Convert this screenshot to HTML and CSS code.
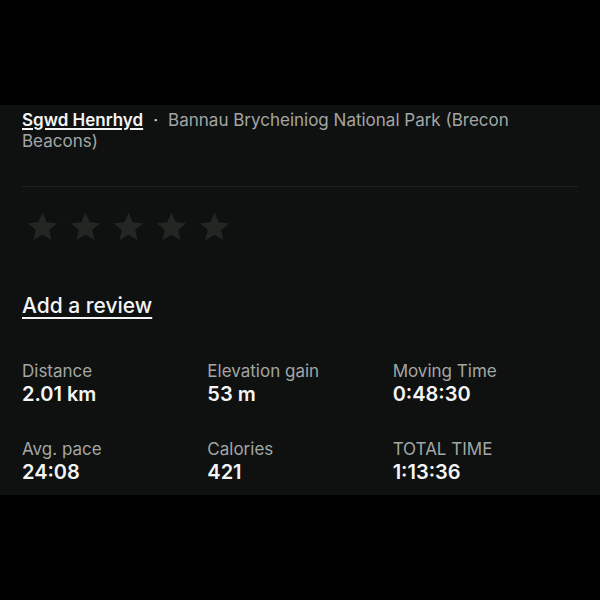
FILE: index.html
```html
<!DOCTYPE html>
<html lang="en">
<head>
    <meta charset="UTF-8">
    <meta name="viewport" content="width=device-width, initial-scale=1.0">
    <title>Activity</title>
    <link rel="stylesheet" href="styles.css">
</head>
<body>

<div class="panel">
    <p class="place">
        <a href="#" class="place-name">Sgwd Henrhyd</a><span class="dot">·</span>Bannau Brycheiniog National Park (Brecon Beacons)
    </p>

    <hr class="divider">

    <div class="stars">
        <svg viewBox="0 0 24 24"><path d="M12 2.5l2.9 6.6 7.1.6-5.4 4.7 1.6 7-6.2-3.7-6.2 3.7 1.6-7L2 9.7l7.1-.6z"/></svg>
        <svg viewBox="0 0 24 24"><path d="M12 2.5l2.9 6.6 7.1.6-5.4 4.7 1.6 7-6.2-3.7-6.2 3.7 1.6-7L2 9.7l7.1-.6z"/></svg>
        <svg viewBox="0 0 24 24"><path d="M12 2.5l2.9 6.6 7.1.6-5.4 4.7 1.6 7-6.2-3.7-6.2 3.7 1.6-7L2 9.7l7.1-.6z"/></svg>
        <svg viewBox="0 0 24 24"><path d="M12 2.5l2.9 6.6 7.1.6-5.4 4.7 1.6 7-6.2-3.7-6.2 3.7 1.6-7L2 9.7l7.1-.6z"/></svg>
        <svg viewBox="0 0 24 24"><path d="M12 2.5l2.9 6.6 7.1.6-5.4 4.7 1.6 7-6.2-3.7-6.2 3.7 1.6-7L2 9.7l7.1-.6z"/></svg>
    </div>

    <a href="#" class="review-link">Add a review</a>

    <div class="stats">
        <div class="stat">
            <div class="stat-label">Distance</div>
            <div class="stat-value">2.01 km</div>
        </div>
        <div class="stat">
            <div class="stat-label">Elevation gain</div>
            <div class="stat-value">53 m</div>
        </div>
        <div class="stat">
            <div class="stat-label">Moving Time</div>
            <div class="stat-value">0:48:30</div>
        </div>
        <div class="stat">
            <div class="stat-label">Avg. pace</div>
            <div class="stat-value">24:08</div>
        </div>
        <div class="stat">
            <div class="stat-label">Calories</div>
            <div class="stat-value">421</div>
        </div>
        <div class="stat">
            <div class="stat-label">TOTAL TIME</div>
            <div class="stat-value">1:13:36</div>
        </div>
    </div>
</div>

</body>
</html>
```

FILE: styles.css
```css
html, body {
    background: #000;
}
body {
    margin: 0;
    padding: 105px 0;
    font-family: Inter, "Noto Sans", sans-serif;
    color: #f2f2f2;
}
.panel {
    background: #0e1110;
    padding: 5px 22px 11px;
}
.place {
    margin: 0;
    font-size: 17px;
    line-height: 21px;
    color: #a3a6a4;
}
.place-name {
    color: #f4f4f4;
    font-weight: 600;
    text-decoration-thickness: 2px;
    text-underline-offset: 2px;
}
.dot {
    display: inline-block;
    margin: 0 10px;
    color: #d8d8d8;
}
.divider {
    border: none;
    border-top: 1px solid #1f2320;
    margin: 34px 0 0;
}
.stars {
    display: flex;
    gap: 8px;
    margin: 22px 0 0 3px;
}
.stars svg {
    width: 35px;
    height: 35px;
    fill: #232622;
}
.review-link {
    display: inline-block;
    margin-top: 49px;
    font-size: 21px;
    line-height: 25px;
    font-weight: 500;
    color: #f4f4f4;
    text-decoration-thickness: 2px;
    text-underline-offset: 4px;
}
.stats {
    display: grid;
    grid-template-columns: repeat(3, 1fr);
    row-gap: 33px;
    margin-top: 43px;
}
.stat-label {
    font-size: 17px;
    line-height: 21px;
    color: #a3a6a4;
}
.stat-value {
    font-size: 20px;
    line-height: 24px;
    font-weight: 600;
    color: #f4f4f4;
}
```
